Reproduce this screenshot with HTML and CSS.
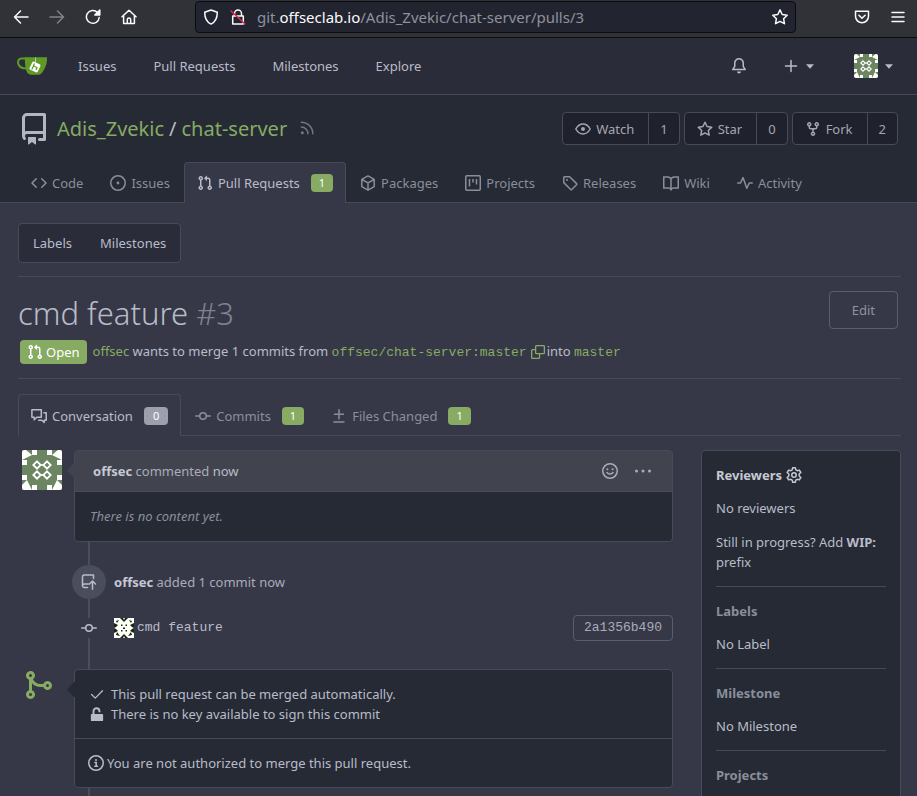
FILE: index.html
```html
<!DOCTYPE html>
<html lang="en">
<head>
<meta charset="utf-8">
<meta name="viewport" content="width=device-width, initial-scale=1">
<title>#3 - cmd feature - chat-server</title>
<link rel="stylesheet" href="styles.css">
</head>
<body>
<svg class="sprite" aria-hidden="true">
  <symbol id="i-code" viewBox="0 0 16 16"><path d="M4.72 3.22a.75.75 0 011.06 1.06L2.06 8l3.72 3.72a.75.75 0 11-1.06 1.06L.47 8.53a.75.75 0 010-1.06l4.25-4.25zm6.56 0a.75.75 0 10-1.06 1.06L13.94 8l-3.72 3.72a.75.75 0 101.06 1.06l4.25-4.25a.75.75 0 000-1.06l-4.25-4.25z"/></symbol>
  <symbol id="i-issue" viewBox="0 0 16 16"><circle class="ln" cx="8" cy="8" r="7.250"/><circle cx="8" cy="8" r="1.400"/></symbol>
  <symbol id="i-pr" viewBox="0 0 16 16"><path fill-rule="evenodd" d="M7.177 3.073L9.573.677A.25.25 0 0110 .854v4.792a.25.25 0 01-.427.177L7.177 3.427a.25.25 0 010-.354zM3.75 2.5a.75.75 0 100 1.5.75.75 0 000-1.5zm-2.25.75a2.25 2.25 0 113 2.122v5.256a2.251 2.251 0 11-1.5 0V5.372A2.25 2.25 0 011.5 3.25zM11 2.5h-1V4h1a1 1 0 011 1v5.628a2.251 2.251 0 101.5 0V5A2.5 2.5 0 0011 2.5zm1 10.25a.75.75 0 111.5 0 .75.75 0 01-1.5 0zM3.75 12a.75.75 0 100 1.5.75.75 0 000-1.5z"/></symbol>
  <symbol id="i-package" viewBox="0 0 16 16"><path class="ln" stroke-linejoin="round" d="M8 .9l6.200 3.500v7.200L8 15.100l-6.200-3.500V4.400zM2 4.500L8 7.900l6-3.400M8 7.900v7"/></symbol>
  <symbol id="i-project" viewBox="0 0 16 16"><rect class="ln" x=".75" y=".75" width="14.500" height="14.500" rx="1"/><path class="ln" d="M4.500 4v7.500M8 4v3.500M11.500 4v5.500"/></symbol>
  <symbol id="i-tag" viewBox="0 0 16 16"><path class="ln" d="M1.750 2.500v5.100l6.900 6.900a.8.8 0 001.100 0l4.800-4.800a.8.8 0 000-1.100l-6.900-6.900H2.600a.85.85 0 00-.85.85z"/><circle cx="5" cy="5" r="1"/></symbol>
  <symbol id="i-book" viewBox="0 0 16 16"><path class="ln" d="M8 4.200C7.500 2.700 6.500 1.900 4.800 1.900H.75v11h4.500c1.400 0 2.300.6 2.750 1.700.45-1.100 1.350-1.700 2.750-1.700h4.500v-11H11.200C9.500 1.900 8.500 2.700 8 4.200zv9.500"/></symbol>
  <symbol id="i-pulse" viewBox="0 0 16 16"><path class="ln" stroke-linecap="round" stroke-linejoin="round" d="M.75 8h2.750L6 2.600l3.800 10.600L12.300 8h3"/></symbol>
  <symbol id="i-repo" viewBox="0 0 16 16"><path fill-rule="evenodd" d="M2 2.500A2.500 2.500 0 014.500 0h8.750a.75.75 0 01.75.75v12.500a.75.75 0 01-.75.75h-2.500a.75.75 0 110-1.500h1.750v-2h-8a1 1 0 00-.714 1.700.75.75 0 01-1.072 1.050A2.495 2.495 0 012 11.500v-9zm10.500-1V9h-8c-.356 0-.694.074-1 .208V2.500a1 1 0 011-1h8zM5 12.250v3.250a.25.25 0 00.4.2l1.450-1.087a.25.25 0 01.3 0L8.600 15.700a.25.25 0 00.4-.2v-3.250a.25.25 0 00-.25-.25h-3.500a.25.25 0 00-.25.25z"/></symbol>
  <symbol id="i-rss" viewBox="0 0 16 16"><path class="ln" stroke-linecap="round" d="M2.300 1.200A11.500 11.500 0 0113.800 12.700M2.300 6a6.700 6.700 0 016.700 6.700"/><circle cx="3.300" cy="11.700" r="1.500"/></symbol>
  <symbol id="i-eye" viewBox="0 0 16 16"><path class="ln" d="M.8 8C2.500 5 5 3 8 3s5.500 2 7.200 5c-1.700 3-4.200 5-7.200 5S2.500 11 .8 8z"/><circle cx="8" cy="8" r="2"/></symbol>
  <symbol id="i-star" viewBox="0 0 16 16"><path class="ln" stroke-linejoin="round" d="M8 1.200l2.050 4.300 4.700.65-3.430 3.300.83 4.700L8 11.900l-4.150 2.250.83-4.700-3.430-3.300 4.700-.65z"/></symbol>
  <symbol id="i-fork" viewBox="0 0 16 16"><path fill-rule="evenodd" d="M5 3.250a.75.75 0 11-1.500 0 .75.75 0 011.500 0zm0 2.122a2.250 2.250 0 10-1.500 0v.878A2.250 2.250 0 005.750 8.500h1.500v2.128a2.251 2.251 0 101.500 0V8.500h1.500a2.250 2.250 0 002.250-2.250v-.878a2.250 2.250 0 10-1.500 0v.878a.75.75 0 01-.75.75h-4.500A.75.75 0 015 6.250v-.878zm3.750 7.378a.75.75 0 11-1.500 0 .75.75 0 011.500 0zm3-8.750a.75.75 0 100-1.500.75.75 0 000 1.500z"/></symbol>
  <symbol id="i-bell" viewBox="0 0 16 16"><path class="ln" stroke-linejoin="round" d="M8 .75A4.250 4.250 0 003.750 5v2.900c0 .4-.1.700-.3 1L1.700 11.600h12.600l-1.750-2.700c-.2-.3-.3-.600-.3-1V5A4.250 4.250 0 008 .75z"/><path d="M6 13.500h4a2 2 0 01-4 0z"/></symbol>
  <symbol id="i-plus" viewBox="0 0 16 16"><path class="ln" stroke-linecap="round" d="M8 2.500v11M2.500 8h11"/></symbol>
  <symbol id="i-caret" viewBox="0 0 8 5"><path d="M0 .3h8L4 4.700z"/></symbol>
  <symbol id="i-copy" viewBox="0 0 16 16"><path class="ln" stroke-linejoin="round" d="M6.300.75h8a1 1 0 011 1v7a1 1 0 01-1 1h-8a1 1 0 01-1-1v-7a1 1 0 011-1zM5.300 5.250H1.750a1 1 0 00-1 1v8a1 1 0 001 1h7a1 1 0 001-1V9.750"/></symbol>
  <symbol id="i-talk" viewBox="0 0 16 16"><path class="ln" stroke-linejoin="round" d="M.9 1.800h9.400v7.400H5.800L3.200 11.700V9.200H.9zM12.300 4.800h2.900v7.400h-2v2.300l-2.400-2.300H7.200"/></symbol>
  <symbol id="i-commit" viewBox="0 0 16 16"><circle class="ln" cx="8" cy="8" r="3.250"/><path class="ln" stroke-linecap="round" d="M.75 8H4.500M11.500 8h3.750"/></symbol>
  <symbol id="i-diff" viewBox="0 0 16 16"><path class="ln" stroke-linecap="round" d="M8 1.800v8.900M3.500 6.200h9M3 14h10"/></symbol>
  <symbol id="i-smile" viewBox="0 0 16 16"><circle class="ln" cx="8" cy="8" r="7.250"/><circle cx="5.400" cy="6.300" r="1"/><circle cx="10.600" cy="6.300" r="1"/><path class="ln" stroke-linecap="round" d="M5 9.500c1.500 2 4.500 2 6 0"/></symbol>
  <symbol id="i-dots" viewBox="0 0 16 16"><circle cx="1.500" cy="8" r="1.500"/><circle cx="8" cy="8" r="1.500"/><circle cx="14.500" cy="8" r="1.500"/></symbol>
  <symbol id="i-push" viewBox="0 0 16 16"><path class="ln" stroke-linejoin="round" stroke-linecap="round" d="M12.500 4.500V.9H3.200C2 .9 1.500 1.700 1.500 2.700v9c0 1 .7 1.700 1.700 1.700h3.300M1.600 11.200c.3-1 .9-1.300 1.800-1.300h3.900M11.500 15.200V7.500M8.500 10l3-3 3 3"/></symbol>
  <symbol id="i-merge" viewBox="0 0 16 16"><path fill-rule="evenodd" d="M5 3.254V3.250v.005a.75.75 0 110-.005v.004zm.45 1.900a2.250 2.250 0 10-1.950.218v5.256a2.250 2.250 0 101.500 0V7.123A5.735 5.735 0 009.250 9h1.378a2.251 2.251 0 100-1.500H9.250a4.250 4.250 0 01-3.800-2.346zM12.750 9a.75.75 0 100-1.500.75.75 0 000 1.500zm-8.500 4.500a.75.75 0 100-1.500.75.75 0 000 1.500z"/></symbol>
  <symbol id="i-check" viewBox="0 0 16 16"><path class="ln" stroke-linecap="round" stroke-linejoin="round" d="M1.800 8.500l4.200 4.200L14.300 4.200"/></symbol>
  <symbol id="i-unlock" viewBox="0 0 16 16"><rect x="1" y="8" width="14" height="8" rx="1"/><path fill="none" stroke="currentColor" stroke-width="2.200" d="M4 8.500V4.800a3.400 3.400 0 016.800 0V6"/></symbol>
  <symbol id="i-info" viewBox="0 0 16 16"><circle class="ln" cx="8" cy="8" r="7.250"/><circle cx="8" cy="4.900" r="1"/><path class="ln" stroke-linecap="round" d="M7 7.500h1.200v3.700M6.800 11.300h2.700"/></symbol>
  <symbol id="i-gear" viewBox="0 0 16 16"><path class="ln" stroke-linejoin="round" d="M6.700.8h2.600l.5 2 1.500.9 2-.6 1.500 2.400-1.600 1.500v2l1.600 1.500-1.500 2.400-2-.6-1.500.9-.5 2.100H6.700l-.5-2.100-1.500-.9-2 .6L1.200 10.500l1.600-1.500V7L1.200 5.500l1.500-2.400 2 .6 1.500-.9z"/><circle class="ln" cx="8" cy="8" r="2.250"/></symbol>
  <symbol id="i-avatar" viewBox="0 0 40 40"><rect width="40" height="40" fill="#6c8662"/><path fill="#fff" d="M0 0h4l6 5-10 5zM10 0h5v5h-5zM0 10h5v5H0zM40 0h-4l-6 5 10 5zM25 0h5v5h-5zM35 10h5v5h-5zM0 40v-5l5-5 5 10zM10 35h5v5h-5zM0 25h5v5H0zM40 40v-5l-5-5-5 10zM25 35h5v5h-5zM35 25h5v5h-5z"/><path fill="none" stroke="#fff" stroke-width="1.800" d="M15 11.300l3.700 3.700-3.700 3.700-3.700-3.700zM25 11.300l3.700 3.700-3.700 3.700-3.700-3.700zM15 21.300l3.700 3.700-3.700 3.700-3.700-3.700zM25 21.300l3.700 3.700-3.700 3.700-3.700-3.700z"/><path fill="#fff" d="M18.500 14.200h3v1.600h-3zM18.500 24.200h3v1.600h-3z"/></symbol>
  <symbol id="i-avatar2" viewBox="0 0 20 20"><rect width="20" height="20" fill="#fffffa"/><path fill="#1a2410" d="M6 0h3l1 2 1-2h3l-4 4zM6 20h3l1-2 1 2h3l-4-4zM0 5l4 2-2 2-2 1zM0 15l4-2-2-2-2-1zM20 5l-4 2 2 2 2 1zM20 15l-4-2 2-2 2-1zM2 3l3-1-2 3zM18 3l-3-1 2 3zM2 17l4 1-3-4zM18 17l-4 1 3-4zM7 6.500h1.500V8H7zM11.500 6.500H13V8h-1.500zM7 12h1.500v1.500H7zM11.500 12H13v1.500h-1.500zM9 9.500h2v1.500H9z"/></symbol>
</svg>

<div class="browser">
  <div class="browser-nav">
    <button type="button" aria-label="Back"><svg class="ico b" viewBox="0 0 16 16"><path d="M15 8H1.500M7.500 2L1.500 8l6 6"/></svg></button>
    <button type="button" class="off" aria-label="Forward"><svg class="ico b" viewBox="0 0 16 16"><path d="M1 8h13.500M8.500 2l6 6-6 6"/></svg></button>
    <button type="button" aria-label="Reload"><svg class="ico b" viewBox="0 0 16 16"><path d="M14.200 8.500A6.400 6.400 0 1112.500 3.500l1.500 1.500"/><path class="fill" d="M14.800 1v5h-5z"/></svg></button>
    <button type="button" aria-label="Home"><svg class="ico b" viewBox="0 0 16 16"><path d="M1 7.800L8 1.200l7 6.600M2.600 6.800v7.700h10.800V6.800M6.300 14.500v-3.800a1.700 1.700 0 013.400 0v3.800"/></svg></button>
  </div>
  <div class="urlbar">
    <svg class="ico b" viewBox="0 0 16 16"><path d="M8 1l6.300 2.200c0 6-2 9.800-6.300 11.900C3.700 13 1.700 9.200 1.700 3.200z"/></svg>
    <svg class="ico b" viewBox="0 0 16 16"><path d="M4.500 7V4.500a3.500 3.500 0 017 0V7M2.700 7h10.600v8H2.700z"/><path class="strike" d="M1 2l14 13"/></svg>
    <div class="url" role="textbox" aria-label="Address" tabindex="0">git.<b>offseclab.io</b>/Adis_Zvekic/chat-server/pulls/3</div>
    <svg class="ico b" viewBox="0 0 16 16"><path d="M8 .9l2.200 4.600 5 .7-3.600 3.500.85 5L8 12.300l-4.450 2.400.85-5L.8 6.200l5-.7z"/></svg>
  </div>
  <div class="browser-end">
    <button type="button" aria-label="Save to Pocket"><svg class="ico b" viewBox="0 0 16 16"><path d="M1.500 2.300h13v5a6.500 6.500 0 01-13 0zM4.900 6.200L8 9.300l3.100-3.100"/></svg></button>
    <button type="button" aria-label="Menu"><svg class="ico b" viewBox="0 0 16 16"><path d="M2 3.500h12M2 8h12M2 12.500h12"/></svg></button>
  </div>
</div>

<div class="page">
  <nav class="topnav">
    <a href="#" class="logo" aria-label="Home"><svg viewBox="0 0 30 20"><path fill="none" stroke="#609926" stroke-width="2" d="M10 2.500H4.500C1.500 2.500.8 5 1.200 7.500 1.800 11 5 12.500 10 12.500"/><path fill="#609926" d="M8 1.200h22c.3 5-1 10.500-4.600 15-1.400 1.900-2.700 2.600-5 2.600h-6c-2.400 0-4-1.300-4.900-3.800C8.200 11 7.600 5.500 8 1.200z"/><path stroke="#cde0ba" stroke-width=".8" d="M18.500 1.500v5"/><rect x="13.500" y="6.500" width="9" height="9" rx="1.500" fill="#fff" transform="rotate(25 18 11)"/><path fill="none" stroke="#609926" stroke-width="1.200" d="M17.500 7.500l-2.700 6M16.500 10l3.500 1.500-1 2.500"/></svg></a>
    <a href="#">Issues</a><a href="#">Pull Requests</a><a href="#">Milestones</a><a href="#">Explore</a>
    <div class="top-end">
      <a href="#" aria-label="Notifications"><svg class="ico"><use href="#i-bell"/></svg></a>
      <button type="button" aria-label="Create"><svg class="ico"><use href="#i-plus"/></svg><svg class="caret"><use href="#i-caret"/></svg></button>
      <button type="button" aria-label="Profile"><svg class="avatar-s"><use href="#i-avatar"/></svg><svg class="caret"><use href="#i-caret"/></svg></button>
    </div>
  </nav>

  <header class="repo">
    <div class="repo-top">
      <svg class="repo-ico"><use href="#i-repo"/></svg>
      <h2><a href="#">Adis_Zvekic</a><span>/</span><a href="#">chat-server</a></h2>
      <a href="#" class="rss" aria-label="RSS"><svg class="ico"><use href="#i-rss"/></svg></a>
      <div class="repo-btns">
        <div class="pair"><button type="button"><svg class="ico"><use href="#i-eye"/></svg>Watch</button><a href="#">1</a></div>
        <div class="pair"><button type="button"><svg class="ico"><use href="#i-star"/></svg>Star</button><a href="#">0</a></div>
        <div class="pair"><button type="button"><svg class="ico"><use href="#i-fork"/></svg>Fork</button><a href="#">2</a></div>
      </div>
    </div>
    <nav class="tabs">
      <a href="#"><svg class="ico"><use href="#i-code"/></svg>Code</a>
      <a href="#"><svg class="ico"><use href="#i-issue"/></svg>Issues</a>
      <a href="#" class="on"><svg class="ico"><use href="#i-pr"/></svg>Pull Requests<span class="badge">1</span></a>
      <a href="#"><svg class="ico"><use href="#i-package"/></svg>Packages</a>
      <a href="#"><svg class="ico"><use href="#i-project"/></svg>Projects</a>
      <a href="#"><svg class="ico"><use href="#i-tag"/></svg>Releases</a>
      <a href="#"><svg class="ico"><use href="#i-book"/></svg>Wiki</a>
      <a href="#"><svg class="ico"><use href="#i-pulse"/></svg>Activity</a>
    </nav>
  </header>

  <main>
    <div class="submenu"><a href="#">Labels</a><a href="#">Milestones</a></div>
    <section class="title">
      <div class="title-row"><h1>cmd feature <span>#3</span></h1><button type="button" class="edit">Edit</button></div>
      <div class="desc">
        <span class="state"><svg class="ico"><use href="#i-pr"/></svg>Open</span>
        <p><a href="#">offsec</a> wants to merge 1 commits from <a href="#" class="mono">offsec/chat-server:master</a></p>
        <button type="button" class="copy" aria-label="Copy branch name"><svg class="ico"><use href="#i-copy"/></svg></button>
        <p>into <a href="#" class="mono">master</a></p>
      </div>
    </section>
    <nav class="tabs pr-tabs">
      <a href="#" class="on"><svg class="ico"><use href="#i-talk"/></svg>Conversation<span class="badge grey">0</span></a>
      <a href="#"><svg class="ico"><use href="#i-commit"/></svg>Commits<span class="badge">1</span></a>
      <a href="#"><svg class="ico"><use href="#i-diff"/></svg>Files Changed<span class="badge">1</span></a>
    </nav>

    <div class="cols">
      <div class="timeline">
        <article class="item">
          <svg class="avatar"><use href="#i-avatar"/></svg>
          <div class="box arrow-light">
            <div class="box-head"><p><a href="#">offsec</a> commented <time>now</time></p>
              <button type="button" aria-label="React"><svg class="ico"><use href="#i-smile"/></svg></button>
              <button type="button" aria-label="More"><svg class="ico"><use href="#i-dots"/></svg></button>
            </div>
            <div class="box-body"><em>There is no content yet.</em></div>
          </div>
        </article>
        <div class="event">
          <span class="round"><svg class="ico"><use href="#i-push"/></svg></span>
          <p><a href="#">offsec</a> added 1 commit now</p>
        </div>
        <div class="event commit">
          <span class="node"><svg class="ico"><use href="#i-commit"/></svg></span>
          <svg class="avatar-xs"><use href="#i-avatar2"/></svg>
          <span class="mono">cmd feature</span>
          <a href="#" class="sha">2a1356b490</a>
        </div>
        <article class="item merge">
          <svg class="merge-ico"><use href="#i-merge"/></svg>
          <div class="box arrow-dark">
            <div class="checks">
              <p><svg class="ico"><use href="#i-check"/></svg>This pull request can be merged automatically.</p>
              <p><svg class="ico"><use href="#i-unlock"/></svg>There is no key available to sign this commit</p>
            </div>
            <p class="notice"><svg class="ico"><use href="#i-info"/></svg>You are not authorized to merge this pull request.</p>
          </div>
        </article>
      </div>
      <aside>
        <section><h3 class="active">Reviewers <svg class="ico"><use href="#i-gear"/></svg></h3><p>No reviewers</p><p class="wip">Still in progress? Add <b>WIP:</b> prefix</p></section>
        <section><h3>Labels</h3><p>No Label</p></section>
        <section><h3>Milestone</h3><p>No Milestone</p></section>
        <section><h3>Projects</h3></section>
      </aside>
    </div>
  </main>
</div>
</body>
</html>
```
FILE: styles.css
```css
* { box-sizing: border-box; }
:root {
  --body: #363848;
  --dark: #252a35;
  --line: #474a59;
  --text: #b9bcc8;
  --muted: #8a8e9b;
  --green: #87ab63;
}
body {
  margin: 0;
  height: 100vh;
  display: flex;
  flex-direction: column;
  background: var(--body);
  color: var(--text);
  font: 13px/20px "Noto Sans", "Liberation Sans", sans-serif;
}
h1, h2, h3, p { margin: 0; font-weight: 400; }
a { color: inherit; text-decoration: none; }
button { font: inherit; color: inherit; background: none; border: 0; padding: 0; display: flex; align-items: center; }
.sprite { position: absolute; width: 0; height: 0; }
.ico { width: 16px; height: 16px; flex: none; fill: currentColor; }
.ln { fill: none; stroke: currentColor; stroke-width: 1.5; }
.b { fill: none; stroke: #fbfbfe; stroke-width: 1.5; stroke-linejoin: round; stroke-linecap: round; }
.b .fill { fill: #fbfbfe; }
.b .strike { stroke: #e22850; }
.mono { font-family: "Liberation Mono", monospace; font-size: 13px; }

.browser {
  flex: none;
  display: flex;
  height: 38px;
  padding: 0 11px 4px 13px;
  align-items: center;
  background: #303238;
  border-bottom: 1px solid #0c0c0f;
}
.browser-nav { display: flex; gap: 20px; width: 182px; }
.browser-nav .off { opacity: .4; }
.urlbar {
  flex: 1;
  display: flex;
  align-items: center;
  gap: 11px;
  height: 32px;
  padding: 0 7px;
  background: #22252f;
  border: 1px solid #0c0c10;
  border-radius: 4px;
}
.url { flex: 1; color: #8f919c; font-size: 15px; white-space: nowrap; }
.url b { font-weight: 400; color: #fbfbfe; }
.browser-end { display: flex; gap: 20px; margin-left: 58px; }

.page { flex: 1; min-height: 0; overflow: auto; scrollbar-width: none; }
.topnav {
  display: flex;
  align-items: center;
  gap: 37px;
  height: 57px;
  padding: 0 24px 0 17px;
  background: #2a2c3a;
  border-bottom: 1px solid var(--line);
}
.logo { margin-right: -6px; }
.logo svg { display: block; width: 30px; height: 20px; }
.top-end { display: flex; align-items: center; gap: 36px; margin-left: auto; }
.top-end a { display: flex; }
.top-end button { gap: 7px; }
.top-end button + button { margin-left: 4px; }
.caret { width: 8px; height: 5px; fill: currentColor; }
.avatar-s { width: 24px; height: 24px; border-radius: 2px; }

.repo { background: var(--dark); border-bottom: 1px solid var(--line); }
.repo-top { display: flex; align-items: center; height: 67px; padding: 0 19px 0 18px; }
.repo-ico { width: 32px; height: 32px; fill: #b3b6c2; }
h2 { margin-left: 7px; font-size: 20px; line-height: 28px; color: var(--text); white-space: nowrap; }
h2 a { color: var(--green); }
h2 span { margin: 0 5px; }
.rss { display: flex; margin-left: 12px; color: #747784; }
.repo-btns { display: flex; gap: 4px; margin-left: auto; }
.pair { display: flex; height: 33px; border: 1px solid var(--line); border-radius: 4px; background: #1f212c; color: #a3a6b2; }
.pair button { gap: 5px; padding: 0 14px 0 12px; }
.pair a { display: flex; align-items: center; padding: 0 11px; border-left: 1px solid var(--line); }

.tabs { display: flex; gap: 1px; padding: 0 18px; }
.tabs a {
  display: flex;
  align-items: center;
  gap: 5px;
  height: 41px;
  padding: 0 12px;
  margin-bottom: -1px;
  border: 1px solid transparent;
  border-bottom: 0;
  border-radius: 4px 4px 0 0;
  color: var(--muted);
  white-space: nowrap;
}
.tabs .on { color: var(--text); background: var(--body); border-color: var(--line); }
.badge {
  margin-left: 6px;
  padding: 0 8px;
  border-radius: 4px;
  background: var(--green);
  color: #fff;
  font-size: 11px;
  line-height: 18px;
}
.badge.grey { padding: 0 9px; background: #9c9fac; }

main { padding: 20px 16px 0 18px; }
.submenu { display: flex; width: fit-content; border: 1px solid var(--line); border-radius: 4px; background: #2a2c3a; }
.submenu a { padding: 9px 14px; line-height: 20px; }
.title { margin-top: 13px; padding: 14px 0 14px; border: 1px solid var(--line); border-width: 1px 0; }
.title-row { display: flex; justify-content: space-between; padding-right: 3px; }
h1 { font-size: 31px; line-height: 44px; font-weight: 300; }
h1 span { color: #7f8290; }
.edit { height: 38px; padding: 0 22px; border: 1px solid #5a5d6b; border-radius: 4px; color: #8f929f; }
.desc { display: flex; align-items: center; margin-top: 5px; padding-left: 2px; white-space: nowrap; }
.desc a { color: var(--green); }
.state { display: flex; align-items: center; gap: 3px; height: 24px; margin-right: 6px; padding: 0 7px; border-radius: 4px; background: var(--green); color: #fff; }
.copy { margin: 0 2px 0 4px; color: var(--green); }
.copy .ico { width: 14px; height: 14px; }
.pr-tabs { margin-top: 15px; padding: 0; border-bottom: 1px solid var(--line); }
.pr-tabs a { height: 42px; }

.cols { display: flex; align-items: flex-start; gap: 28px; margin-top: 14px; }
.timeline { position: relative; flex: 1; min-width: 0; padding-left: 56px; padding-bottom: 40px; }
.timeline::before { content: ""; position: absolute; left: 70px; top: 20px; bottom: 0; width: 2px; background: #4a4d5c; }
.item { position: relative; }
.avatar { position: absolute; left: -52px; top: 0; width: 40px; height: 40px; border-radius: 2px; }
.merge-ico { position: absolute; left: -52px; top: 0; width: 32px; height: 32px; fill: var(--green); }
.box { position: relative; background: var(--dark); border: 1px solid var(--line); border-radius: 4px; }
.box::before { content: ""; position: absolute; left: -6px; top: 14px; width: 11px; height: 11px; transform: rotate(45deg); background: var(--dark); }
.arrow-light::before { background: #41444f; }
.box-head { position: relative; display: flex; align-items: center; gap: 17px; height: 41px; padding: 0 21px 0 18px; border-bottom: 1px solid var(--line); background: #41444f; color: #a9acb8; }
.box-head p { flex: 1; }
.box-head time { color: var(--text); }
.box-head a, .event a:not(.sha) { font-weight: 700; color: #c6c9d4; }
.box-body { padding: 14px 15px 15px; color: var(--muted); }
.event { position: relative; display: flex; align-items: center; margin-top: 23px; color: #a9acb8; }
.round { display: flex; align-items: center; justify-content: center; width: 34px; height: 34px; margin: 0 8px 0 -2px; border-radius: 50%; background: #4a4d5c; color: var(--text); }
.commit { margin-top: 16px; height: 26px; }
.node { display: flex; width: 16px; padding: 2px 0; margin: 0 17px 0 7px; background: var(--body); color: var(--text); }
.avatar-xs { width: 20px; height: 20px; margin-right: 3px; }
.commit .mono { color: var(--text); }
.sha { margin-left: auto; padding: 2px 10px; border: 1px solid #5a5d6b; border-radius: 4px; font: 13px/20px "Liberation Mono", monospace; }
.merge { margin-top: 28px; }
.checks { position: relative; padding: 14px 15px; border-bottom: 1px solid var(--line); }
.checks p { display: flex; align-items: center; gap: 7px; }
.checks .ico { width: 14px; height: 14px; }
.notice { display: flex; align-items: center; gap: 3px; padding: 14px 13px; }

aside { width: 200px; padding: 14px; background: var(--dark); border: 1px solid var(--line); border-radius: 4px; }
aside section + section { margin-top: 14px; padding-top: 14px; border-top: 1px solid var(--line); }
aside h3 { display: flex; align-items: center; gap: 4px; font-size: 13px; font-weight: 700; color: var(--muted); }
aside .active { color: #c6c9d4; }
aside p { margin-top: 13px; }
aside .wip { margin-top: 14px; }
```
